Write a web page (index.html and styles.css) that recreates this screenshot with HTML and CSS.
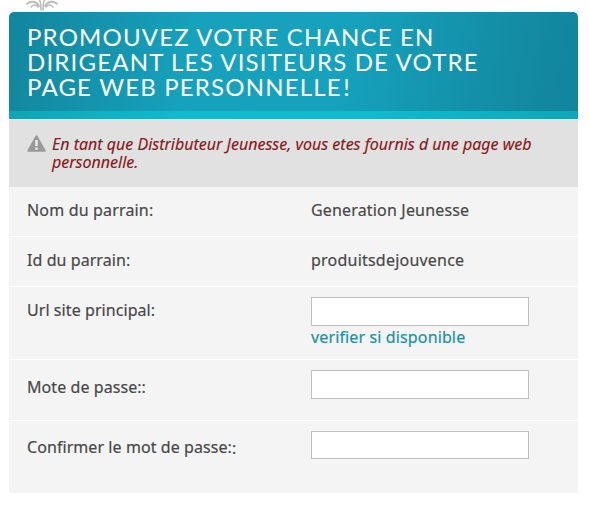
FILE: index.html
```html
<!DOCTYPE html>
<html lang="fr">
<head>
<meta charset="utf-8">
<title>Page web personnelle</title>
<link rel="stylesheet" href="styles.css">
</head>
<body>
<div class="brand">
<svg class="fountain" width="34" height="12" viewBox="0 0 34 12" fill="none" stroke="#bdbdbd" stroke-linecap="round">
<path stroke-width="2" d="M2 3.800C6 .5 11 1 14 6M32 3.800C28 .5 23 1 20 6"/>
<path stroke-width="1.600" d="M6 7C8 4.500 11 4 13 7M28 7C26 4.500 23 4 21 7"/>
<path stroke-width="1.600" d="M14.500 0Q16 3 16 10M19.500 0Q18 3 18 10"/>
</svg>
</div>
<main class="card">
<header class="head">
<h1 class="title">PROMOUVEZ VOTRE CHANCE EN<br>DIRIGEANT LES VISITEURS DE VOTRE<br>PAGE WEB PERSONNELLE<span class="bang">!</span></h1>
</header>
<div class="notice">
<svg class="warn" width="20" height="18" viewBox="0 0 20 18">
<path fill="#999" stroke="#999" stroke-width="2" stroke-linejoin="round" d="M9.500 1.200L17.700 15.800H1.300Z"/>
<path stroke="#eee" stroke-width="2.400" d="M9.500 5V11M9.500 12.500V14.800"/>
</svg>
<p class="message">En tant que Distributeur Jeunesse, vous etes fournis d une page web<br>personnelle.</p>
</div>
<form class="fields">
<div class="row"><span class="label">Nom du parrain:</span><span class="value">Generation Jeunesse</span></div>
<div class="row"><span class="label slim">Id du parrain:</span><span class="value wide">produitsdejouvence</span></div>
<div class="row url"><label class="label slim" for="url">Url site principal:</label><div class="value"><input class="input" id="url" type="text"><a class="check">verifier si disponible</a></div></div>
<div class="row pass"><label class="label slim" for="pw">Mote de passe::</label><div class="value"><input class="input" id="pw" type="password"></div></div>
<div class="row confirm"><label class="label slim" for="pw2">Confirmer le mot de passe:<span class="drop">:</span></label><div class="value"><input class="input short" id="pw2" type="password"></div></div>
</form>
</main>
</body>
</html>
```

FILE: styles.css
```css
* { box-sizing: border-box; }
body {
  margin: 0;
  background: #fff;
  color: #484848;
  font: 16px/22px "Noto Sans", sans-serif;
  overflow: hidden;
}
.brand { height: 12px; padding-left: 25px; }
.fountain { display: block; }
.card { width: 569px; margin-left: 9px; }
.head {
  height: 107px;
  padding: 12px 18px 0;
  border-radius: 5px 5px 0 0;
  background:
    linear-gradient(90deg, #12a3b8, #13b8d1 30%, #12b8d0 65%, #10a5bb) 0 99px / 100% 8px no-repeat,
    linear-gradient(100deg, #12869d, #16a2bd 33%, #16a2bd 58%, #12869d 96%);
}
.title {
  margin: 0;
  color: #fff;
  font: 400 24px/25px Lato, sans-serif;
  letter-spacing: 1.18px;
  white-space: nowrap;
}
.bang { margin-left: 1.500px; }
.notice {
  display: flex;
  height: 68px;
  padding: 15px 18px 0;
  border-top: 1px solid #fff;
  background: #e1e1e1;
}
.warn { flex: none; margin-right: 5px; }
.message {
  margin: 0;
  color: #8a1820;
  font-size: 16px;
  font-style: italic;
  line-height: 18px;
  white-space: nowrap;
  -webkit-text-stroke: 0.15px;
}
.fields { background: #f4f4f4; }
.row {
  display: grid;
  grid-template-columns: 284px 1fr;
  height: 50px;
  padding: 12px 18px 0;
  border-bottom: 1px solid #fff;
}
.label, .value {
  white-space: nowrap;
  letter-spacing: 0.17px;
  -webkit-text-stroke: 0.2px;
}
.slim { letter-spacing: 0.07px; }
.wide { letter-spacing: 0.22px; }
.url { height: 73px; padding-top: 10px; }
.url .label { padding-top: 2px; }
.pass { height: 61px; padding-top: 10px; }
.pass .label { padding-top: 6px; }
.confirm { height: 72px; padding-top: 10px; border-bottom: 0; }
.confirm .label { padding-top: 5px; }
.drop { position: relative; top: 1px; }
.input {
  display: block;
  width: 218px;
  height: 29px;
  margin: 0;
  padding: 4px 8px;
  border: 1px solid #bfbfbf;
  background: #fff;
}
.short { height: 28px; }
.check { display: block; width: max-content; color: #218fa5; letter-spacing: 0.13px; }
```
